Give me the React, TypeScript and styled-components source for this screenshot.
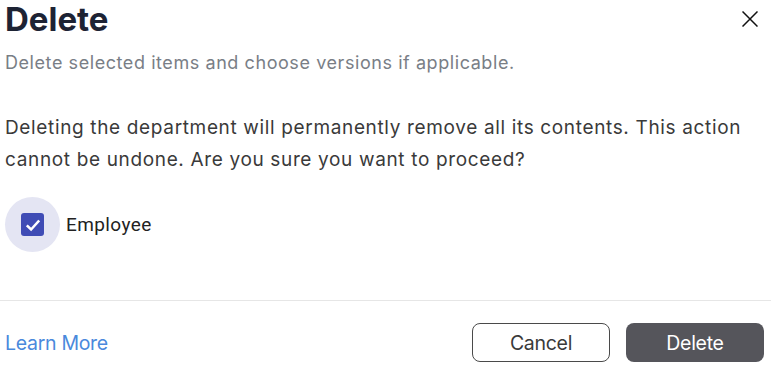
import React from "react";
import styled, { createGlobalStyle } from "styled-components";

const Global = createGlobalStyle`
  html, body { margin: 0; padding: 0; background: #fff; }
  body { font-family: Inter, "Noto Sans", sans-serif; }
`;

const Dialog = styled.div`
  width: 771px;
  height: 367px;
  box-sizing: border-box;
  display: flex;
  flex-direction: column;
  background: #fff;
`;

const Header = styled.div`
  display: flex;
  justify-content: space-between;
  align-items: flex-start;
  padding: 0 13px 0 5px;
`;

const Title = styled.h1`
  margin: -1px 0 0 0;
  font-size: 33px;
  line-height: 40px;
  font-weight: 700;
  color: #1d2334;
`;

const CloseButton = styled.button`
  border: none;
  background: none;
  padding: 0;
  margin-top: 11px;
  width: 16px;
  height: 16px;
  display: flex;
  cursor: pointer;
`;

const Subtitle = styled.p`
  margin: 12px 0 0 5px;
  font-size: 18px;
  line-height: 24px;
  color: #797e86;
  letter-spacing: 0.57px;
`;

const Body = styled.div`
  padding: 0 5px;
  flex: 1;
`;

const Message = styled.p`
  margin: 37px 0 0 0;
  font-size: 19px;
  line-height: 32px;
  color: #3a3a3a;
  letter-spacing: 0.65px;
`;

const CheckRow = styled.label`
  display: flex;
  align-items: center;
  gap: 6px;
  margin: 21px 0 0 0;
`;

const CheckHalo = styled.span`
  width: 55px;
  height: 55px;
  border-radius: 50%;
  background: #e4e5f3;
  display: flex;
  align-items: center;
  justify-content: center;
`;

const CheckBox = styled.span`
  width: 23px;
  height: 23px;
  border-radius: 3px;
  background: #3f4cb5;
  display: flex;
  align-items: center;
  justify-content: center;
`;

const CheckLabel = styled.span`
  font-family: Roboto, "Noto Sans", sans-serif;
  font-size: 19px;
  color: #222;
  letter-spacing: 0.4px;
`;

const Divider = styled.hr`
  margin: 0;
  border: none;
  border-top: 1px solid #e6e6e6;
`;

const Footer = styled.div`
  display: flex;
  align-items: center;
  justify-content: space-between;
  padding: 22px 7px 5px 5px;
`;

const LinkText = styled.a`
  font-size: 19.5px;
  color: #4a89dc;
  text-decoration: none;
  letter-spacing: -0.3px;
`;

const Actions = styled.div`
  display: flex;
  gap: 16px;
`;

const Button = styled.button<{ $primary?: boolean }>`
  width: 138px;
  height: 39px;
  border-radius: 8px;
  font-family: Inter, sans-serif;
  font-size: 19.5px;
  letter-spacing: -0.3px;
  box-sizing: border-box;
  cursor: pointer;
  border: ${(p) => (p.$primary ? "none" : "1px solid #4a4a4a")};
  background: ${(p) => (p.$primary ? "#55555b" : "#fff")};
  color: ${(p) => (p.$primary ? "#fff" : "#3a3a3a")};
`;

export default function App() {
  return (
    <>
      <Global />
      <Dialog>
        <Header>
          <Title>Delete</Title>
          <CloseButton aria-label="Close">
            <svg width="16" height="16" viewBox="0 0 16 16">
              <path d="M0.5 0.5 L15.5 15.5 M15.5 0.5 L0.5 15.5" stroke="#111" strokeWidth="1.5" />
            </svg>
          </CloseButton>
        </Header>
        <Subtitle>Delete selected items and choose versions if applicable.</Subtitle>
        <Body>
          <Message>
            Deleting the department will permanently remove all its contents. This action
            cannot be undone. Are you sure you want to proceed?
          </Message>
          <CheckRow>
            <CheckHalo>
              <CheckBox>
                <svg width="18" height="18" viewBox="0 0 16 16">
                  <path d="M2.5 8.3 L6.3 12 L13.5 4" fill="none" stroke="#fff" strokeWidth="2.3" />
                </svg>
              </CheckBox>
            </CheckHalo>
            <CheckLabel>Employee</CheckLabel>
          </CheckRow>
        </Body>
        <Divider />
        <Footer>
          <LinkText href="#">Learn More</LinkText>
          <Actions>
            <Button>Cancel</Button>
            <Button $primary>Delete</Button>
          </Actions>
        </Footer>
      </Dialog>
    </>
  );
}
